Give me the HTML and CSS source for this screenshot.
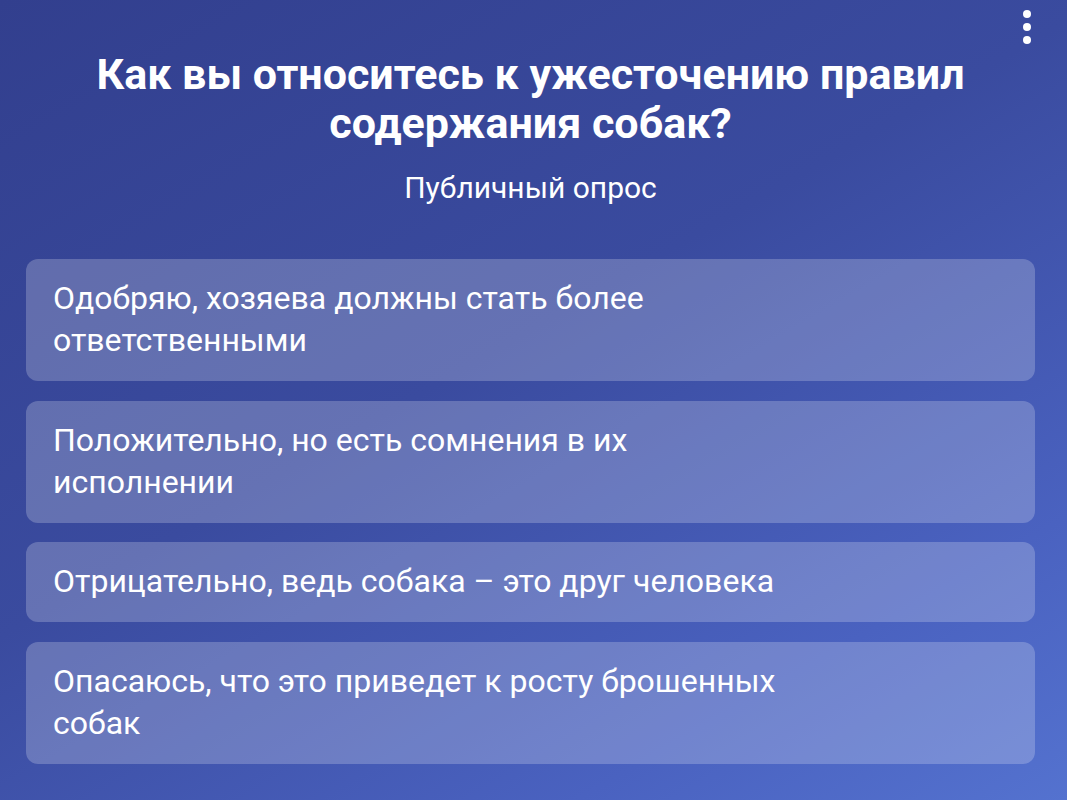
FILE: index.html
```html
<!DOCTYPE html>
<html lang="ru">
<head>
<meta charset="utf-8">
<link rel="stylesheet" href="styles.css">
</head>
<body>
<div class="poll">
  <button class="menu" aria-label="Меню">
    <span class="dot"></span><span class="dot"></span><span class="dot"></span>
  </button>
  <header class="head">
    <h1 class="title">Как вы относитесь к ужесточению правил содержания собак?</h1>
    <div class="sub">Публичный опрос</div>
  </header>
  <div class="options">
    <div class="option"><span class="label">Одобряю, хозяева должны стать более ответственными</span></div>
    <div class="option"><span class="label">Положительно, но есть сомнения в их исполнении</span></div>
    <div class="option"><span class="label">Отрицательно, ведь собака – это друг человека</span></div>
    <div class="option"><span class="label">Опасаюсь, что это приведет к росту брошенных собак</span></div>
  </div>
</div>
</body>
</html>
```

FILE: styles.css
```css
html, body {
  margin: 0;
  padding: 0;
}
body {
  width: 1067px;
  height: 800px;
  overflow: hidden;
  font-family: Roboto, "Liberation Sans", sans-serif;
  color: #fff;
}
.poll {
  position: relative;
  box-sizing: border-box;
  width: 1067px;
  height: 800px;
  padding: 50px 32px 0 26px;
  background: linear-gradient(150deg, #323f8e 0%, #3a4b9f 45%, #4a62c0 80%, #5472cf 100%);
}
.menu {
  position: absolute;
  top: 10px;
  right: 36px;
  display: flex;
  flex-direction: column;
  gap: 5px;
  padding: 0;
  background: none;
  border: 0;
}
.dot {
  width: 8px;
  height: 8px;
  border-radius: 50%;
  background: #fff;
}
.head {
  text-align: center;
}
.title {
  margin: 0 auto;
  font-size: 43px;
  font-weight: 700;
  line-height: 49px;
}
.sub {
  margin-top: 22px;
  font-size: 30px;
  line-height: 36px;
}
.options {
  margin-top: 53px;
  display: flex;
  flex-direction: column;
  gap: 19.5px;
}
.option {
  box-sizing: border-box;
  padding: 18px 27px 20px;
  border-radius: 12px;
  background: rgba(255, 255, 255, 0.22);
  font-size: 32px;
  line-height: 42px;
}
.label {
  display: block;
  max-width: 745px;
}
```
